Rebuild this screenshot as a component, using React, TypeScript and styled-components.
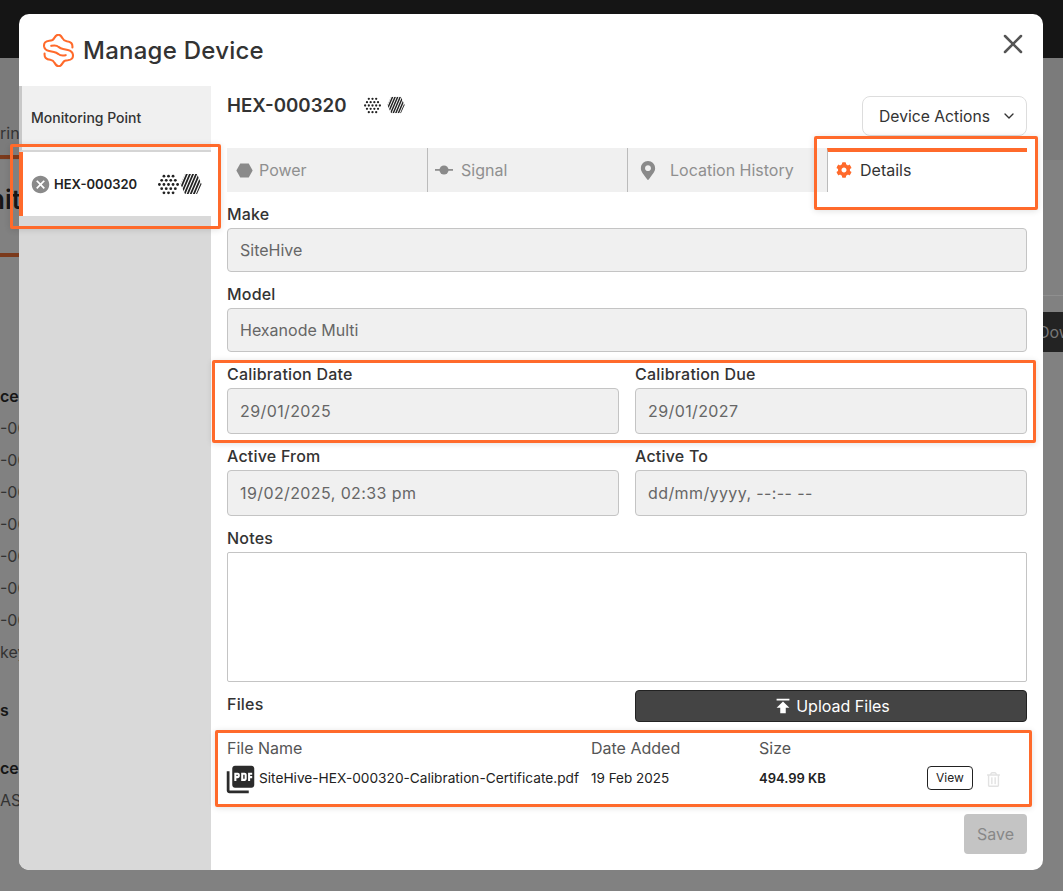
import { FC } from 'react';
import styled, { createGlobalStyle } from 'styled-components';
import { FaCog, FaMapMarkerAlt, FaRegTrashAlt } from 'react-icons/fa';
import { MdCancel, MdPictureAsPdf, MdPublish } from 'react-icons/md';
import { LuChevronDown, LuX } from 'react-icons/lu';

const GlobalStyle = createGlobalStyle`
  html, body {
    margin: 0;
    padding: 0;
    font-family: Inter, "Noto Sans", sans-serif;
    color: #333;
  }
  * { box-sizing: border-box; }
`;

const Page = styled.div`
  position: relative;
  width: 1063px;
  height: 891px;
  overflow: hidden;
  background: #818181;
  display: flex;
  flex-direction: column;
`;

const TopBar = styled.div`
  height: 58px;
  flex-shrink: 0;
  background: #151515;
`;

const SubHeader = styled.div`
  height: 102px;
  flex-shrink: 0;
  background: #7b7b7b;
  padding-top: 65px;
`;

const Behind = styled.div`
  flex: 1;
  display: flex;
  justify-content: space-between;
`;

const BehindColumn = styled.div<{ $width: number }>`
  width: ${({ $width }) => $width}px;
  overflow: hidden;
  white-space: nowrap;
`;

const BehindText = styled.div<{ $mt?: number; $h?: number; $bold?: boolean; $size?: number; $indent?: number }>`
  margin-top: ${({ $mt }) => $mt ?? 0}px;
  height: ${({ $h }) => $h ?? 20}px;
  line-height: ${({ $h }) => $h ?? 20}px;
  font-size: ${({ $size }) => $size ?? 16}px;
  font-weight: ${({ $bold }) => ($bold ? 600 : 400)};
  text-indent: ${({ $indent }) => $indent ?? 0}px;
  color: ${({ $bold }) => ($bold ? '#161616' : '#333')};
`;

const BehindBar = styled.div<{ $mt: number }>`
  margin-top: ${({ $mt }) => $mt}px;
  width: 19px;
  height: 4px;
  background: #7b3a1c;
`;

const BehindLine = styled.div`
  margin-top: 135px;
  height: 1px;
  background: #8f8f8f;
`;

const BehindButton = styled.div`
  margin-top: 16px;
  height: 40px;
  line-height: 40px;
  background: #232323;
  color: #777;
  font-size: 16px;
  text-indent: -5px;
`;

const Modal = styled.div`
  position: absolute;
  left: 19px;
  top: 14px;
  width: 1024px;
  height: 856px;
  background: #fff;
  border-radius: 10px;
  overflow: hidden;
  display: flex;
  flex-direction: column;
`;

const ModalHeader = styled.div`
  height: 72px;
  flex-shrink: 0;
  display: flex;
  align-items: center;
  justify-content: space-between;
  padding: 0 14px 0 24px;
`;

const ModalTitle = styled.div`
  display: flex;
  align-items: center;
  gap: 9px;
  font-size: 24px;
  font-weight: 500;
  letter-spacing: 0.25px;
  color: #333;
`;

const CloseButton = styled.div`
  display: flex;
  color: #555;
  margin-top: -12px;
`;

const ModalBody = styled.div`
  flex: 1;
  display: flex;
  min-height: 0;
`;

const Sidebar = styled.div`
  width: 192px;
  flex-shrink: 0;
  background: #d9d9d9;
`;

const SidebarPoint = styled.div`
  height: 66px;
  padding: 0 0 1px 9px;
  display: flex;
  align-items: center;
  background: #f0f0f0;
  border-left: 3px solid #c8c8c8;
  border-bottom: 2px solid #d5d5d5;
  font-size: 14px;
  font-weight: 500;
  color: #333;
`;

const SidebarDevice = styled.div`
  height: 64px;
  padding: 0 9px 0 7px;
  display: flex;
  align-items: center;
  background: #fff;
  border-left: 4px solid #ff6a2b;
  font-size: 13px;
  font-weight: 600;
  color: #222;
`;

const SidebarDeviceName = styled.span`
  margin-left: 3px;
  flex: 1;
`;

const HexPair = styled.span<{ $gap: number }>`
  display: inline-flex;
  align-items: center;
  gap: ${({ $gap }) => $gap}px;
`;

const Main = styled.div`
  flex: 1;
  min-width: 0;
  padding: 10px 16px 16px;
  display: flex;
  flex-direction: column;
`;

const DeviceRow = styled.div`
  height: 40px;
  margin-bottom: 12px;
  display: flex;
  justify-content: space-between;
  align-items: flex-start;
`;

const DeviceTitle = styled.div`
  display: flex;
  align-items: center;
  gap: 17px;
  margin-top: -4px;
  height: 26px;
  font-size: 18.7px;
  font-weight: 600;
  color: #333;
`;

const ActionsButton = styled.div`
  width: 165px;
  height: 40px;
  padding: 0 9px 0 16px;
  display: flex;
  align-items: center;
  justify-content: space-between;
  border: 1px solid #ddd;
  border-radius: 8px;
  background: #fff;
  font-size: 15.7px;
  color: #333;
`;

const Tabs = styled.div`
  display: grid;
  grid-template-columns: repeat(4, 200px);
  height: 44px;
`;

const Tab = styled.div<{ $active?: boolean; $first?: boolean; $pl: number; $gap: number }>`
  display: flex;
  align-items: center;
  gap: ${({ $gap }) => $gap}px;
  padding-left: ${({ $pl }) => $pl}px;
  padding-bottom: ${({ $active }) => ($active ? '4px' : '0')};
  font-size: 16px;
  background: ${({ $active }) => ($active ? '#fff' : '#f0f0f0')};
  color: ${({ $active }) => ($active ? '#333' : '#8f8f8f')};
  border-left: ${({ $first }) => ($first ? 'none' : '1px solid #bbb')};
  border-top: ${({ $active }) => ($active ? '4px solid #ff6a2b' : 'none')};
`;

const TabIcon = styled.span<{ $active?: boolean }>`
  display: flex;
  width: 18px;
  justify-content: center;
  color: ${({ $active }) => ($active ? '#ff6a2b' : '#8a8a8a')};
`;

const Field = styled.div<{ $mt?: number }>`
  margin-top: ${({ $mt }) => $mt ?? 12}px;
  min-width: 0;
`;

const FieldRow = styled.div`
  display: grid;
  grid-template-columns: 392px 392px;
  column-gap: 16px;
`;

const Label = styled.div`
  height: 20px;
  line-height: 20px;
  margin-bottom: 4px;
  font-size: 16px;
  font-weight: 500;
  letter-spacing: 0.2px;
  color: #333;
`;

const Input = styled.input<{ $h?: number; $spaced?: boolean }>`
  display: block;
  width: 100%;
  height: ${({ $h }) => $h ?? 44}px;
  padding: 0 12px;
  background: #f0f0f0;
  border: 1px solid #c4c4c4;
  border-radius: 4px;
  font: inherit;
  font-size: 16px;
  letter-spacing: ${({ $spaced }) => ($spaced ? '0.4px' : '0')};
  color: #666;
  outline: none;
`;

const Notes = styled.textarea`
  display: block;
  width: 100%;
  height: 130px;
  background: #fff;
  border: 1px solid #c4c4c4;
  border-radius: 2px;
  resize: none;
  outline: none;
`;

const FilesRow = styled.div`
  margin-top: 8px;
  display: grid;
  grid-template-columns: 392px 392px;
  column-gap: 16px;
  align-items: center;
`;

const UploadButton = styled.div`
  height: 32px;
  display: flex;
  align-items: center;
  justify-content: center;
  gap: 2px;
  background: #444;
  border: 1px solid #222;
  border-radius: 4px;
  color: #fff;
  font-size: 16px;
`;

const TableHead = styled.div`
  margin-top: 16px;
  height: 20px;
  line-height: 20px;
  display: grid;
  grid-template-columns: 364px 168px 168px 1fr;
  font-size: 16px;
  color: #555;
`;

const TableRow = styled.div`
  margin-top: 8px;
  height: 24px;
  display: grid;
  grid-template-columns: 364px 168px 168px 1fr;
  grid-template-rows: 24px;
  align-items: center;
  font-size: 13px;
  color: #222;
`;

const FileName = styled.div`
  height: 24px;
  display: flex;
  align-items: center;
  gap: 2px;
  font-size: 13.7px;
  white-space: nowrap;
`;

const FileIcon = styled.span`
  display: flex;
  align-items: center;
  width: 33px;
  height: 24px;
  margin: 3px 0 0 -3px;
  flex-shrink: 0;
  color: #2b2b2b;
`;

const FileDate = styled.div`
  font-size: 13.5px;
`;

const FileSize = styled.div`
  font-weight: 600;
`;

const FileActions = styled.div`
  display: flex;
  align-items: center;
  gap: 13px;
`;

const ViewButton = styled.div`
  width: 46px;
  height: 24px;
  line-height: 22px;
  text-align: center;
  border: 1px solid #222;
  border-radius: 4px;
  font-size: 12px;
`;

const TrashIcon = styled.span`
  display: flex;
  margin-top: 3px;
  color: #e2e2e2;
`;

const Footer = styled.div`
  margin-top: 24px;
  display: flex;
  justify-content: flex-end;
`;

const SaveButton = styled.div`
  width: 63px;
  height: 40px;
  line-height: 40px;
  text-align: center;
  background: #c4c4c4;
  border-radius: 4px;
  font-size: 16px;
  color: #888;
`;

const Annotation = styled.div<{ $x: number; $y: number; $w: number; $h: number }>`
  position: absolute;
  left: ${({ $x }) => $x}px;
  top: ${({ $y }) => $y}px;
  width: ${({ $w }) => $w}px;
  height: ${({ $h }) => $h}px;
  border: 3px solid #ff6a2b;
  border-radius: 2px;
  box-shadow: 0 1px 6px rgba(0, 0, 0, 0.12);
  pointer-events: none;
`;

const Logo: FC = () => (
  <svg width="31" height="33" viewBox="0 0 30 32" fill="none" stroke="#ff6a2b" strokeWidth="2" strokeLinecap="round" strokeLinejoin="round">
    <path d="M28.5 13 Q29 7.5 23 7 Q20 6.5 18.8 4 Q15 -2.8 10.8 4 Q9.8 6.5 6 6.5 Q0.5 7 1 12 Q1.5 15.5 6 16.5 L10.5 17.5 Q13 18 15 19.5 Q17 21.5 22 20.5" />
    <path d="M1.5 19 Q1 24.5 7 25 Q10 25.5 11.2 28 Q15 34.8 19.2 28 Q20.2 25.5 24 25.5 Q29.5 25 29 20 Q28.5 16.5 24 15.5 L19.5 14.5 Q17 14 15 12.5 Q13 10.5 8 11.5" />
  </svg>
);

const hexPoints = '5.5,1 18.5,1 23.5,12 18.5,23 5.5,23 0.5,12';

const DOT_ROWS = [3, 4, 5, 4, 3];

const HexDots: FC<{ size: number }> = ({ size }) => (
  <svg width={size} height={size} viewBox="0 0 24 24" fill="#222">
    {DOT_ROWS.map((count, row) =>
      Array.from({ length: count }, (_, i) => (
        <circle key={`${row}-${i}`} cx={12 + (i - (count - 1) / 2) * 5.2} cy={2.5 + row * 4.75} r="1.6" />
      ))
    )}
  </svg>
);

const HexStripes: FC<{ size: number; id: string }> = ({ size, id }) => (
  <svg width={size} height={size} viewBox="0 0 24 24">
    <defs>
      <clipPath id={id}>
        <polygon points={hexPoints} />
      </clipPath>
    </defs>
    <g clipPath={`url(#${id})`} stroke="#222" strokeWidth="1.9">
      {Array.from({ length: 14 }, (_, i) => (
        <line key={i} x1={-10 + i * 3.4} y1="26" x2={2 + i * 3.4} y2="-2" />
      ))}
    </g>
  </svg>
);

const PowerIcon: FC = () => (
  <svg width="17" height="15" viewBox="0 0 24 21" fill="currentColor">
    <polygon points="6,0.5 18,0.5 23.5,10.5 18,20.5 6,20.5 0.5,10.5" />
  </svg>
);

const SignalIcon: FC = () => (
  <svg width="19" height="12" viewBox="0 0 19 12" fill="currentColor">
    <rect x="0" y="5" width="19" height="1.8" />
    <circle cx="9.5" cy="6" r="4.8" />
  </svg>
);

export default function App() {
  return (
    <Page>
      <GlobalStyle />
      <TopBar />
      <SubHeader>
        <BehindColumn $width={19}>
          <BehindText>rin</BehindText>
          <BehindBar $mt={12} />
        </BehindColumn>
      </SubHeader>
      <Behind>
        <BehindColumn $width={19}>
          <BehindText $mt={24} $h={32} $size={26} $bold $indent={-11}>nit</BehindText>
          <BehindBar $mt={37} />
          <BehindText $mt={129} $bold>ce</BehindText>
          <BehindText $mt={6} $h={32}>-00</BehindText>
          <BehindText $h={32}>-00</BehindText>
          <BehindText $h={32}>-00</BehindText>
          <BehindText $h={32}>-00</BehindText>
          <BehindText $h={32}>-00</BehindText>
          <BehindText $h={32}>-00</BehindText>
          <BehindText $h={32}>-00</BehindText>
          <BehindText $h={32}>key</BehindText>
          <BehindText $mt={32} $bold>s</BehindText>
          <BehindText $mt={38} $bold>ce</BehindText>
          <BehindText $mt={6} $h={32}>AS</BehindText>
        </BehindColumn>
        <BehindColumn $width={20}>
          <BehindLine />
          <BehindButton>Dow</BehindButton>
        </BehindColumn>
      </Behind>

      <Modal>
        <ModalHeader>
          <ModalTitle>
            <Logo />
            Manage Device
          </ModalTitle>
          <CloseButton>
            <LuX size={32} strokeWidth={1.9} />
          </CloseButton>
        </ModalHeader>
        <ModalBody>
          <Sidebar>
            <SidebarPoint>Monitoring Point</SidebarPoint>
            <SidebarDevice>
              <MdCancel size={21} color="#8a8a8a" />
              <SidebarDeviceName>HEX-000320</SidebarDeviceName>
              <HexPair $gap={1}>
                <HexDots size={21} />
                <HexStripes size={22} id="stripes-side" />
              </HexPair>
            </SidebarDevice>
          </Sidebar>
          <Main>
            <DeviceRow>
              <DeviceTitle>
                HEX-000320
                <HexPair $gap={6}>
                  <HexDots size={17} />
                  <HexStripes size={18} id="stripes-head" />
                </HexPair>
              </DeviceTitle>
              <ActionsButton>
                Device Actions
                <LuChevronDown size={16} />
              </ActionsButton>
            </DeviceRow>
            <Tabs>
              <Tab $first $pl={8} $gap={6}>
                <TabIcon><PowerIcon /></TabIcon>
                Power
              </Tab>
              <Tab $pl={7} $gap={8}>
                <TabIcon><SignalIcon /></TabIcon>
                Signal
              </Tab>
              <Tab $pl={11} $gap={13}>
                <TabIcon><FaMapMarkerAlt size={19} /></TabIcon>
                Location History
              </Tab>
              <Tab $active $pl={7} $gap={7}>
                <TabIcon $active><FaCog size={16} /></TabIcon>
                Details
              </Tab>
            </Tabs>
            <Field>
              <Label>Make</Label>
              <Input readOnly value="SiteHive" />
            </Field>
            <Field>
              <Label>Model</Label>
              <Input readOnly value="Hexanode Multi" />
            </Field>
            <FieldRow>
              <Field>
                <Label>Calibration Date</Label>
                <Input $h={46} $spaced readOnly value="29/01/2025" />
              </Field>
              <Field>
                <Label>Calibration Due</Label>
                <Input $h={46} $spaced readOnly value="29/01/2027" />
              </Field>
            </FieldRow>
            <FieldRow>
              <Field>
                <Label>Active From</Label>
                <Input $h={46} $spaced readOnly value="19/02/2025, 02:33 pm" />
              </Field>
              <Field>
                <Label>Active To</Label>
                <Input $h={46} $spaced readOnly value="dd/mm/yyyy, --:-- --" />
              </Field>
            </FieldRow>
            <Field>
              <Label>Notes</Label>
              <Notes readOnly />
            </Field>
            <FilesRow>
              <Label>Files</Label>
              <UploadButton>
                <MdPublish size={22} />
                Upload Files
              </UploadButton>
            </FilesRow>
            <TableHead>
              <div>File Name</div>
              <div>Date Added</div>
              <div>Size</div>
            </TableHead>
            <TableRow>
              <FileName>
                <FileIcon><MdPictureAsPdf size={33} /></FileIcon>
                SiteHive-HEX-000320-Calibration-Certificate.pdf
              </FileName>
              <FileDate>19 Feb 2025</FileDate>
              <FileSize>494.99 KB</FileSize>
              <FileActions>
                <ViewButton>View</ViewButton>
                <TrashIcon><FaRegTrashAlt size={15} /></TrashIcon>
              </FileActions>
            </TableRow>
            <Footer>
              <SaveButton>Save</SaveButton>
            </Footer>
          </Main>
        </ModalBody>
      </Modal>

      <Annotation $x={10} $y={144} $w={211} $h={85} />
      <Annotation $x={814} $y={136} $w={224} $h={74} />
      <Annotation $x={212} $y={360} $w={824} $h={83} />
      <Annotation $x={215} $y={730} $w={817} $h={77} />
    </Page>
  );
}
